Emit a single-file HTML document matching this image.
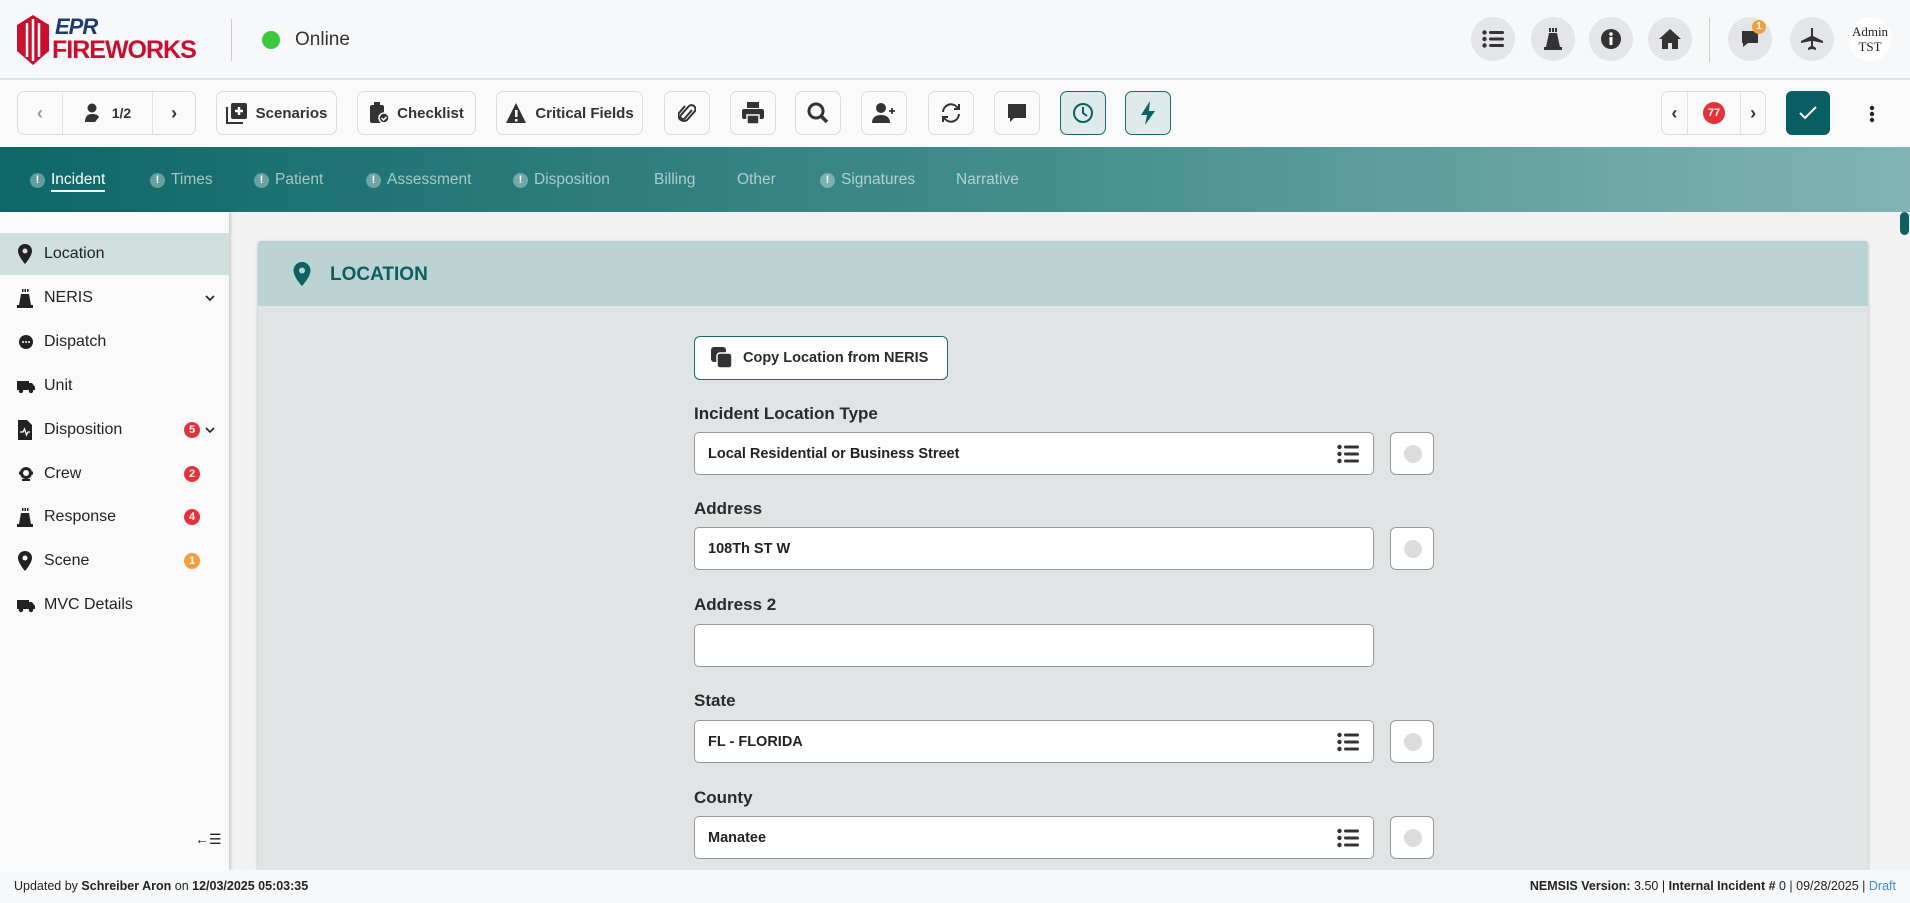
<!DOCTYPE html><html><head><meta charset="utf-8"><style>
*{box-sizing:border-box;margin:0;padding:0}
body{width:1910px;height:903px;overflow:hidden;font-family:"Liberation Sans",sans-serif;background:#f2f2f2;position:relative;color:#222}
.abs{position:absolute}
#hdr{left:0;top:0;width:1910px;height:80px;background:#f7f8fa;border-bottom:2px solid #e2e3e5}
.circ{position:absolute;top:17px;width:44px;height:44px;border-radius:50%;background:#e3e5e9;display:flex;align-items:center;justify-content:center}
#tb{left:0;top:80px;width:1910px;height:67px;background:#fafafa}
.btn{position:absolute;top:11px;height:44px;border:1px solid #dcdcdc;border-radius:7px;background:#fafafa;display:flex;align-items:center;justify-content:center;font-size:15px;font-weight:bold;color:#333;gap:8px}
#tabs{left:0;top:147px;width:1910px;height:65px;background:linear-gradient(90deg,#0e6768 0%,#3f8a8a 50%,#82b4b4 100%)}
.tab{position:absolute;top:24px;font-size:15.5px;color:rgba(255,255,255,.6)}
.ex{display:inline-block;width:15px;height:15px;border-radius:50%;background:rgba(255,255,255,.35);color:#fff;font-size:11px;font-weight:bold;text-align:center;line-height:15px;margin-right:6px;vertical-align:1px}
#side{left:0;top:212px;width:229px;height:658px;background:#fafafa;box-shadow:2px 0 3px rgba(0,0,0,.15)}
.it{position:absolute;left:0;width:229px;height:42px;display:flex;align-items:center;font-size:16px;color:#222}
.it svg{position:absolute;left:17px}
.it span{position:absolute;left:44px}
.bd{position:absolute;left:184px;width:16px;height:16px;border-radius:50%;background:#e8303a;color:#fff;font-size:11px;font-weight:bold;text-align:center;line-height:16px}
.it .chev{position:absolute;left:205px}
#card{left:258px;top:241px;width:1610px;height:640px;background:#e0e4e4;box-shadow:0 1px 3px rgba(0,0,0,.25);border-radius:3px}
#ch{left:0;top:0;width:1610px;height:65px;background:#bcd3d3;border-radius:3px 3px 0 0}
.lbl{position:absolute;left:694px;font-size:17px;font-weight:600;color:#2a2a2a}
.inp{position:absolute;left:694px;width:680px;height:43px;background:#fff;border:1px solid #9a9a9a;border-radius:5px;font-size:14.5px;font-weight:bold;color:#222;padding-left:13px;line-height:43px}
.sb{position:absolute;left:1390px;width:44px;height:43px;background:#fff;border:1px solid #9a9a9a;border-radius:6px}
.sb::after{content:"";position:absolute;left:13px;top:12px;width:18px;height:18px;border-radius:50%;background:#dcdcdc}
.lst{position:absolute;right:14px;top:11px}
#ft{left:0;top:870px;width:1910px;height:33px;background:#f7f8fa;font-size:12.5px;line-height:33px}
</style></head><body>
<div id="hdr" class="abs">
 <svg class="abs" style="left:15px;top:15px" width="36" height="50" viewBox="0 0 36 50"><path d="M18 0 L34 10 L34 36 L18 50 L2 36 L2 10Z" fill="#c8102e"/><path d="M12 8v34M18 4v42M24 8v34" stroke="#fff" stroke-width="2.5" fill="none"/></svg>
 <div class="abs" style="left:55px;top:14px;font-style:italic;font-weight:bold;color:#1f3a6e;font-size:22px;letter-spacing:-1px">EPR</div>
 <div class="abs" style="left:52px;top:36px;font-weight:bold;color:#c8102e;font-size:25px;letter-spacing:-1px">FIREWORKS</div>
 <div class="abs" style="left:231px;top:19px;width:1px;height:42px;background:#ccc"></div>
 <div class="abs" style="left:262px;top:31px;width:18px;height:18px;border-radius:50%;background:#3dc93d"></div>
 <div class="abs" style="left:295px;top:29px;font-size:19px;color:#333">Online</div>
 <div class="circ" style="left:1471px"><svg width="22" height="18" viewBox="0 0 22 18" fill="#333"><circle cx="2.5" cy="2.5" r="2.2"/><circle cx="2.5" cy="9" r="2.2"/><circle cx="2.5" cy="15.5" r="2.2"/><rect x="7" y="1" width="15" height="3" rx="1.5"/><rect x="7" y="7.5" width="15" height="3" rx="1.5"/><rect x="7" y="14" width="15" height="3" rx="1.5"/></svg></div>
 <div class="circ" style="left:1531px"><svg width="18" height="22" viewBox="0 0 18 22" fill="#333"><rect x="5" y="0" width="2" height="4"/><rect x="8" y="0" width="2" height="4"/><rect x="11" y="0" width="2" height="4"/><path d="M5 5h8l3 14H2z"/><rect x="0" y="19" width="18" height="3"/></svg></div>
 <div class="circ" style="left:1589px"><svg width="22" height="22"><circle cx="11" cy="11" r="10" fill="#333"/><rect x="9.5" y="9" width="3" height="8" fill="#fff"/><circle cx="11" cy="6" r="1.8" fill="#fff"/></svg></div>
 <div class="circ" style="left:1648px"><svg width="22" height="20" viewBox="0 0 22 20" fill="#333"><path d="M11 0L0 10h3v10h6v-6h4v6h6V10h3z"/></svg></div>
 <div class="abs" style="left:1709px;top:18px;width:1px;height:44px;background:#ccc"></div>
 <div class="circ" style="left:1728px"><svg width="20" height="20"><path d="M2 2h16v12H8l-5 4v-4H2z" fill="#333"/></svg><div class="abs" style="left:24px;top:3px;width:14px;height:14px;border-radius:50%;background:#f0a040;color:#fff;font-size:10px;font-weight:bold;text-align:center;line-height:14px">1</div></div>
 <div class="circ" style="left:1790px"><svg width="22" height="22" viewBox="0 0 22 22" fill="#333"><path d="M10 0h2v8l10 5v2l-10-2v5l3 2v2l-4-1-4 1v-2l3-2v-5L0 15v-2l10-5z"/></svg></div>
 <div class="abs" style="left:1848px;top:17px;width:44px;height:44px;border-radius:50%;background:#fff;font-family:'Liberation Serif',serif;font-size:13px;text-align:center;line-height:15px;padding-top:7px">Admin<br>TST</div>
</div>
<div id="tb" class="abs">
 <div class="btn" style="left:17px;width:179px;gap:0;justify-content:flex-start">
  <div style="width:44px;text-align:center;color:#999;font-size:18px">‹</div>
  <div style="width:92px;height:42px;border-left:1px solid #e2e2e2;border-right:1px solid #e2e2e2;display:flex;align-items:center;justify-content:center;gap:10px;font-size:14px"><svg width="18" height="20" fill="#333"><circle cx="8" cy="5" r="4.5"/><path d="M1 19c0-6 3-8 7-8s6 1 7 3l-4 5z"/></svg>1/2</div>
  <div style="width:42px;text-align:center;font-size:18px">›</div>
 </div>
 <div class="btn" style="left:216px;width:121px"><svg width="22" height="22" fill="#333"><rect x="5" y="1" width="16" height="16" rx="2"/><path d="M1 5v16h16" stroke="#333" stroke-width="2" fill="none"/><path d="M13 5v8M9 9h8" stroke="#fff" stroke-width="2.5"/></svg>Scenarios</div>
 <div class="btn" style="left:357px;width:119px"><svg width="20" height="22" fill="#333"><rect x="1" y="3" width="14" height="18" rx="2"/><rect x="5" y="0" width="6" height="4"/><circle cx="15" cy="16" r="5" fill="#333" stroke="#fafafa" stroke-width="1.5"/><path d="M12.5 16l2 2 3-3" stroke="#fff" stroke-width="1.5" fill="none"/></svg>Checklist</div>
 <div class="btn" style="left:496px;width:147px"><svg width="22" height="22"><path d="M11 1L21 21H1z" fill="#333"/><rect x="10" y="8" width="2.5" height="7" fill="#fff"/><rect x="10" y="17" width="2.5" height="2.5" fill="#fff"/></svg>Critical Fields</div>
 <div class="btn" style="left:664px;width:46px"><svg width="18" height="22" viewBox="0 0 18 22"><path d="M14 8l-7 8a2.5 2.5 0 01-4-3l8-9a4 4 0 016 5l-8 9a5.5 5.5 0 01-8-7l6-7" stroke="#333" stroke-width="2" fill="none"/></svg></div>
 <div class="btn" style="left:730px;width:46px"><svg width="22" height="22" fill="#333"><rect x="5" y="0" width="12" height="6"/><rect x="0" y="7" width="22" height="10" rx="2"/><rect x="5" y="13" width="12" height="9" stroke="#fafafa" stroke-width="1.5"/></svg></div>
 <div class="btn" style="left:795px;width:46px"><svg width="22" height="22"><circle cx="9" cy="9" r="7" stroke="#333" stroke-width="3" fill="none"/><path d="M14 14l6 6" stroke="#333" stroke-width="3.5"/></svg></div>
 <div class="btn" style="left:861px;width:46px"><svg width="24" height="20" fill="#333"><circle cx="9" cy="5" r="5"/><path d="M0 20c0-6 4-8 9-8s9 2 9 8z"/><path d="M20 5v6M17 8h6" stroke="#333" stroke-width="1.8"/></svg></div>
 <div class="btn" style="left:928px;width:46px"><svg width="22" height="22" viewBox="0 0 22 22" fill="none" stroke="#333" stroke-width="2"><path d="M3 10a8 8 0 0114-5l2 2M19 12a8 8 0 01-14 5l-2-2"/><path d="M19 2v5h-5M3 20v-5h5"/></svg></div>
 <div class="btn" style="left:994px;width:46px"><svg width="20" height="20"><path d="M1 1h18v14H7l-4 4v-4H1z" fill="#333"/></svg></div>
 <div class="btn" style="left:1060px;width:46px;background:#dfeaea;border-color:#176b6c"><svg width="22" height="22"><circle cx="11" cy="11" r="9" stroke="#0d6163" stroke-width="2" fill="none"/><path d="M11 5v6l4 3" stroke="#0d6163" stroke-width="2" fill="none"/></svg></div>
 <div class="btn" style="left:1125px;width:46px;background:#dfeaea;border-color:#176b6c"><svg width="16" height="24" viewBox="0 0 16 24"><path d="M10 0L1 14h6l-2 10 10-14H9z" fill="#0d6163"/></svg></div>
 <div class="btn" style="left:1661px;width:105px;gap:0;justify-content:flex-start">
  <div style="width:25px;text-align:center;font-size:18px">‹</div>
  <div style="width:55px;height:42px;border-left:1px solid #e2e2e2;border-right:1px solid #e2e2e2;display:flex;align-items:center;justify-content:center"><div style="width:22px;height:22px;border-radius:50%;background:#e8303a;color:#fff;font-size:11px;line-height:22px;text-align:center">77</div></div>
  <div style="width:24px;text-align:center;font-size:18px">›</div>
 </div>
 <div class="abs" style="left:1786px;top:11px;width:44px;height:44px;background:#075e63;border-radius:6px;display:flex;align-items:center;justify-content:center"><svg width="18" height="14"><path d="M1 7l5 5 11-11" stroke="#fff" stroke-width="2" fill="none"/></svg></div>
 <svg class="abs" style="left:1869px;top:25px" width="6" height="18" fill="#222"><circle cx="3" cy="3" r="2.2"/><circle cx="3" cy="9" r="2.2"/><circle cx="3" cy="15" r="2.2"/></svg>
</div>
<div id="tabs" class="abs">
 <div class="tab" style="left:30px;color:#fff"><span class="ex">!</span><span style="border-bottom:2px solid #fff;padding-bottom:2px">Incident</span></div>
 <div class="tab" style="left:150px"><span class="ex">!</span>Times</div>
 <div class="tab" style="left:254px"><span class="ex">!</span>Patient</div>
 <div class="tab" style="left:366px"><span class="ex">!</span>Assessment</div>
 <div class="tab" style="left:513px"><span class="ex">!</span>Disposition</div>
 <div class="tab" style="left:654px">Billing</div>
 <div class="tab" style="left:737px">Other</div>
 <div class="tab" style="left:820px"><span class="ex">!</span>Signatures</div>
 <div class="tab" style="left:956px">Narrative</div>
</div>
<div id="side" class="abs">
 <div class="it" style="top:21px;height:42px;background:#cfe0df"><svg width="16" height="20"><path d="M8 0a7 7 0 017 7c0 5-7 13-7 13S1 12 1 7a7 7 0 017-7z" fill="#222"/><circle cx="8" cy="7" r="2.5" fill="#cfe0df"/></svg><span>Location</span></div>
 <div class="it" style="top:65px"><svg width="16" height="20" fill="#222"><path d="M4 6h8l2 11H2z"/><rect x="0" y="17" width="16" height="3"/><rect x="5" y="1" width="1.5" height="3"/><rect x="7.5" y="1" width="1.5" height="3"/><rect x="10" y="1" width="1.5" height="3"/></svg><span>NERIS</span><svg class="chev" width="10" height="8"><path d="M1 2l4 4 4-4" stroke="#222" stroke-width="1.6" fill="none"/></svg></div>
 <div class="it" style="top:109px"><svg width="18" height="18"><circle cx="9" cy="9" r="7" fill="#222"/><circle cx="6" cy="9" r="1" fill="#fff"/><circle cx="9" cy="9" r="1" fill="#fff"/><circle cx="12" cy="9" r="1" fill="#fff"/></svg><span>Dispatch</span></div>
 <div class="it" style="top:153px"><svg width="18" height="16" fill="#222"><rect x="0" y="3" width="12" height="9"/><path d="M12 5h3l3 4v3h-6z"/><circle cx="4" cy="13" r="2.2"/><circle cx="14" cy="13" r="2.2"/></svg><span>Unit</span></div>
 <div class="it" style="top:197px"><svg width="16" height="20" fill="#222"><path d="M1 0h9l5 5v15H1z"/><path d="M3 12h3l1.5-3 2 6 1.5-3h2" stroke="#fff" stroke-width="1.3" fill="none"/></svg><span>Disposition</span><div class="bd">5</div><svg class="chev" width="10" height="8"><path d="M1 2l4 4 4-4" stroke="#222" stroke-width="1.6" fill="none"/></svg></div>
 <div class="it" style="top:241px"><svg width="18" height="18"><circle cx="9" cy="8" r="6" fill="#222"/><path d="M2 8h14" stroke="#222" stroke-width="3"/><circle cx="9" cy="8" r="3" fill="#fff"/><path d="M5 15h8" stroke="#222" stroke-width="2"/></svg><span>Crew</span><div class="bd">2</div></div>
 <div class="it" style="top:284px"><svg width="16" height="20" fill="#222"><path d="M4 6h8l2 11H2z"/><rect x="0" y="17" width="16" height="3"/><rect x="5" y="1" width="1.5" height="3"/><rect x="7.5" y="1" width="1.5" height="3"/><rect x="10" y="1" width="1.5" height="3"/></svg><span>Response</span><div class="bd">4</div></div>
 <div class="it" style="top:328px"><svg width="16" height="20"><path d="M8 0a7 7 0 017 7c0 5-7 13-7 13S1 12 1 7a7 7 0 017-7z" fill="#222"/><circle cx="8" cy="7" r="2.5" fill="#fafafa"/></svg><span>Scene</span><div class="bd" style="background:#f0a040">1</div></div>
 <div class="it" style="top:372px"><svg width="18" height="16" fill="#222"><rect x="0" y="3" width="12" height="9"/><path d="M12 5h3l3 4v3h-6z"/><circle cx="4" cy="13" r="2.2"/><circle cx="14" cy="13" r="2.2"/></svg><span>MVC Details</span></div>
 <div class="abs" style="left:195px;top:619px;font-size:14px;color:#222">←☰</div>
</div>
<div class="abs" style="left:1898px;top:212px;width:12px;height:658px;background:#f2f2f2"><div style="margin-left:2px;margin-top:0;width:9px;height:23px;border-radius:5px;background:#0d6163"></div></div>
<div id="card" class="abs">
 <div id="ch" class="abs"><svg class="abs" style="left:35px;top:21px" width="18" height="24"><path d="M9 0a8.5 8.5 0 018.5 8.5C17.5 15 9 24 9 24S.5 15 .5 8.5A8.5 8.5 0 019 0z" fill="#0d6163"/><circle cx="9" cy="8.5" r="3" fill="#bcd3d3"/></svg><div class="abs" style="left:72px;top:23px;font-size:19px;font-weight:bold;color:#0d5e60">LOCATION</div></div>
</div>
<div class="abs" style="left:694px;top:336px;width:254px;height:44px;border:1px solid #176b6c;border-radius:6px;background:#fff;display:flex;align-items:center;gap:10px;padding-left:16px;font-size:14.5px;font-weight:bold;color:#2a2a2a"><svg width="22" height="22" fill="#333"><rect x="0" y="0" width="15" height="15" rx="3"/><rect x="6" y="6" width="15" height="15" rx="3" stroke="#fff" stroke-width="1.5"/></svg>Copy Location from NERIS</div>
<div class="lbl" style="top:404px">Incident Location Type</div>
<div class="inp" style="top:432px">Local Residential or Business Street<svg class="lst" width="22" height="20" fill="#333"><circle cx="2.5" cy="3" r="2.2"/><circle cx="2.5" cy="10" r="2.2"/><circle cx="2.5" cy="17" r="2.2"/><rect x="7" y="1.5" width="15" height="3" rx="1.5"/><rect x="7" y="8.5" width="15" height="3" rx="1.5"/><rect x="7" y="15.5" width="15" height="3" rx="1.5"/></svg></div>
<div class="sb" style="top:432px"></div>
<div class="lbl" style="top:499px">Address</div>
<div class="inp" style="top:527px">108Th ST W</div>
<div class="sb" style="top:527px"></div>
<div class="lbl" style="top:595px">Address 2</div>
<div class="inp" style="top:624px"></div>
<div class="lbl" style="top:691px">State</div>
<div class="inp" style="top:720px">FL - FLORIDA<svg class="lst" width="22" height="20" fill="#333"><circle cx="2.5" cy="3" r="2.2"/><circle cx="2.5" cy="10" r="2.2"/><circle cx="2.5" cy="17" r="2.2"/><rect x="7" y="1.5" width="15" height="3" rx="1.5"/><rect x="7" y="8.5" width="15" height="3" rx="1.5"/><rect x="7" y="15.5" width="15" height="3" rx="1.5"/></svg></div>
<div class="sb" style="top:720px"></div>
<div class="lbl" style="top:788px">County</div>
<div class="inp" style="top:816px">Manatee<svg class="lst" width="22" height="20" fill="#333"><circle cx="2.5" cy="3" r="2.2"/><circle cx="2.5" cy="10" r="2.2"/><circle cx="2.5" cy="17" r="2.2"/><rect x="7" y="1.5" width="15" height="3" rx="1.5"/><rect x="7" y="8.5" width="15" height="3" rx="1.5"/><rect x="7" y="15.5" width="15" height="3" rx="1.5"/></svg></div>
<div class="sb" style="top:816px"></div>
<div id="ft" class="abs">
 <div class="abs" style="left:14px">Updated by <b>Schreiber Aron</b> on <b>12/03/2025 05:03:35</b></div>
 <div class="abs" style="right:14px"><b>NEMSIS Version:</b> 3.50 | <b>Internal Incident #</b> 0 | 09/28/2025 | <span style="color:#3a8fd0">Draft</span></div>
</div>
</body></html>
